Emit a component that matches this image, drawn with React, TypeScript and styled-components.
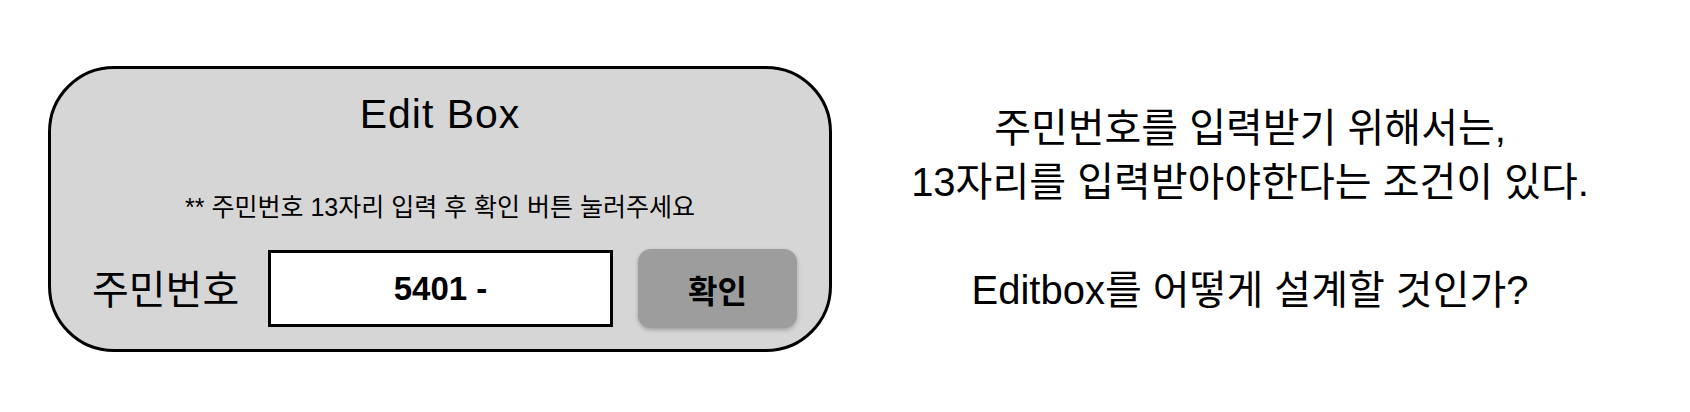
import styled, { createGlobalStyle } from "styled-components";

const GlobalStyle = createGlobalStyle`
    body {
        margin: 0;
        background: #fff;
        font-family: "Liberation Sans", "Noto Sans CJK KR", sans-serif;
        color: #000;
    }
`

const Page = styled.div`
    display: flex;
    align-items: center;
    gap: 28px;
    padding: 66px 0 0 48px;
`

const Card = styled.div`
    box-sizing: border-box;
    width: 784px;
    height: 286px;
    background: #d6d6d6;
    border: 3px solid #000;
    border-radius: 66px;
    padding: 21px 32px 0 41px;
    display: flex;
    flex-direction: column;
    align-items: center;
`

const Title = styled.div`
    font-size: 41px;
    line-height: 49px;
    letter-spacing: 1px;
    margin-left: -9px;
`

const Hint = styled.div`
    margin-top: 53px;
    margin-left: -9px;
    font-size: 25px;
    line-height: 30px;
    font-family: "Liberation Sans", "Noto Sans CJK KR", sans-serif;
`

const Row = styled.div`
    align-self: stretch;
    margin-top: 27px;
    display: flex;
    align-items: center;
`

const Label = styled.span`
    font-family: "Noto Sans CJK KR", sans-serif;
    font-size: 40px;
    line-height: 48px;
    width: 176px;
    margin-top: -4px;
`

const Input = styled.input`
    box-sizing: border-box;
    width: 345px;
    height: 77px;
    border: 3px solid #000;
    background: #fff;
    text-align: center;
    font-family: "Liberation Sans", sans-serif;
    font-weight: bold;
    font-size: 33px;
    color: #000;
    outline: none;
`

const ConfirmBtn = styled.button`
    margin-left: 25px;
    width: 159px;
    height: 79px;
    border: none;
    border-radius: 13px;
    background: #9d9d9d;
    box-shadow: 0 2px 4px rgba(0, 0, 0, 0.25);
    font-family: "Noto Sans CJK KR", sans-serif;
    font-weight: bold;
    font-size: 32px;
    color: #000;
    cursor: pointer;
`

const Question = styled.div`
    width: 780px;
    text-align: center;
    font-family: "Liberation Sans", "Noto Sans CJK KR", sans-serif;
    font-size: 40px;
    line-height: 54px;
`

const Line = styled.p<{ $gap?: boolean }>`
    margin: ${({ $gap }) => ($gap ? "54px 0 0" : "0")};
`

const App = () => {
    return (
        <>
            <GlobalStyle />
            <Page>
                <Card>
                    <Title>Edit Box</Title>
                    <Hint>** 주민번호 13자리 입력 후 확인 버튼 눌러주세요</Hint>
                    <Row>
                        <Label>주민번호</Label>
                        <Input defaultValue="5401 -" />
                        <ConfirmBtn type="button">확인</ConfirmBtn>
                    </Row>
                </Card>
                <Question>
                    <Line>주민번호를 입력받기 위해서는,</Line>
                    <Line>13자리를 입력받아야한다는 조건이 있다.</Line>
                    <Line $gap>Editbox를 어떻게 설계할 것인가?</Line>
                </Question>
            </Page>
        </>
    )
}

export default App;
